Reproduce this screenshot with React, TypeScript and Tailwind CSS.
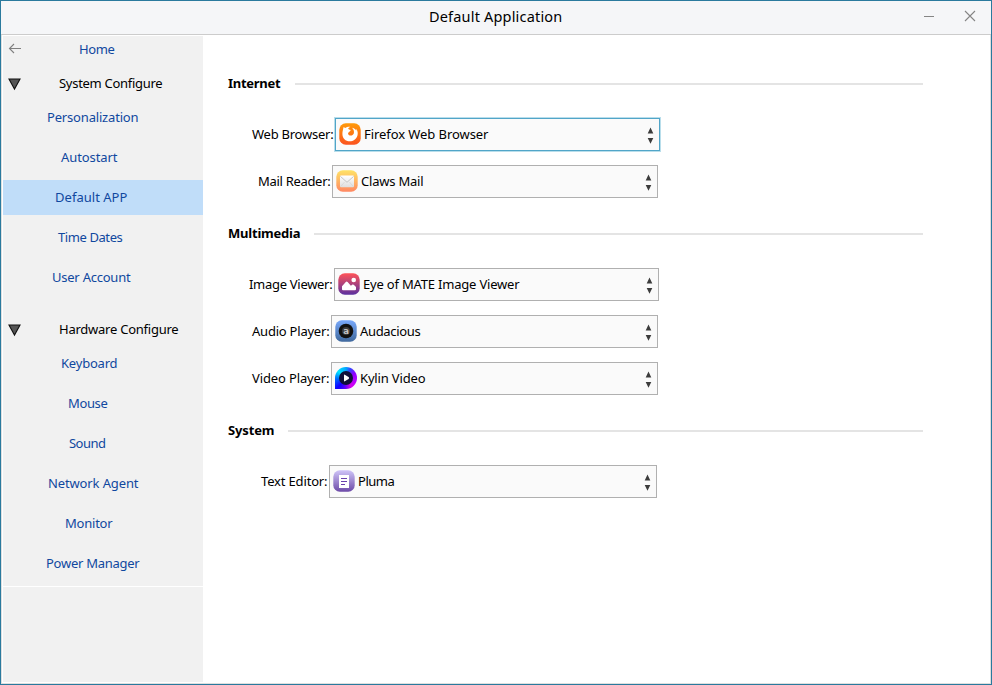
import React, { useLayoutEffect, useRef, useState } from "react";

/* Text label whose tracking adapts so that it fills its given width. */
function Label({ text, width, className = "" }: { text: string; width: number; className?: string }) {
  const ref = useRef<HTMLSpanElement>(null);
  const [spacing, setSpacing] = useState(0);
  useLayoutEffect(() => {
    if (ref.current) setSpacing((width - 0.6 - ref.current.getBoundingClientRect().width) / text.length);
  }, []);
  return (
    <span ref={ref} className={`shrink-0 whitespace-nowrap ${className}`} style={{ letterSpacing: spacing }}>
      {text}
    </span>
  );
}

function FirefoxIcon() {
  return (
    <svg width="22" height="22" viewBox="0 0 22 22">
      <defs>
        <linearGradient id="ff" x1="0" y1="0" x2="0" y2="1">
          <stop offset="0" stopColor="#ff9a08" />
          <stop offset="1" stopColor="#fb5320" />
        </linearGradient>
      </defs>
      <rect x="0.3" y="0.3" width="21.4" height="21.4" rx="6.5" fill="url(#ff)" />
      <path d="M4.6 4 6.2 5.1C7.5 4 9.3 3.5 11.3 3.7L9.2 5.3C9.3 6.6 10.4 6.9 11.9 7.1L10.4 8.8C8.9 9.5 8.6 10.9 9.8 11.9C11.7 13.3 14.1 12.2 14.8 10.4C15.4 8.7 14.7 6.4 13 4.8C15.5 5.2 16.8 6.7 17.2 7.8L17.3 5.8C18.8 8 19.1 10.5 18.4 12.7C17.3 16.2 14.3 18.3 10.8 18.3C6.5 18.3 3.4 15 3.4 10.9C3.4 8.2 4.1 6.6 4.6 4Z" fill="#fff" />
    </svg>
  );
}

function MailIcon() {
  return (
    <svg width="22" height="22" viewBox="0 0 22 22">
      <defs>
        <linearGradient id="ml" x1="0" y1="0" x2="0" y2="1">
          <stop offset="0" stopColor="#ffe266" />
          <stop offset="1" stopColor="#ff8862" />
        </linearGradient>
        <linearGradient id="env" x1="0" y1="0" x2="0" y2="1">
          <stop offset="0" stopColor="#fff" />
          <stop offset="1" stopColor="#dedede" />
        </linearGradient>
      </defs>
      <rect x="0.3" y="0.3" width="21.4" height="21.4" rx="6.5" fill="url(#ml)" />
      <rect x="4" y="5.5" width="14" height="11.8" rx="1" fill="url(#env)" />
      <path d="M4.4 6.4 11 12.3 17.6 6.4" fill="none" stroke="#bdbdbd" strokeWidth="0.9" />
      <path d="M4.6 16.6 8.6 12M17.4 16.6 13.4 12" fill="none" stroke="#d0d0d0" strokeWidth="0.6" />
    </svg>
  );
}

function ImageIcon() {
  return (
    <svg width="22" height="22" viewBox="0 0 22 22">
      <defs>
        <linearGradient id="im" x1="0" y1="0" x2="0" y2="1">
          <stop offset="0" stopColor="#ff5358" />
          <stop offset="1" stopColor="#5b309f" />
        </linearGradient>
      </defs>
      <rect x="0.3" y="0.3" width="21.4" height="21.4" rx="6.5" fill="url(#im)" />
      <path d="M4 16.2V13.2L7.8 8.9Q8.7 8 9.6 8.9L12.9 12.8 14.5 11.6Q15.3 11.1 16 11.9L18 14V16.2Q18 17.2 17 17.2H5Q4 17.2 4 16.2Z" fill="#fff" />
      <circle cx="15.7" cy="7" r="2.3" fill="#fff" />
    </svg>
  );
}

function AudioIcon() {
  return (
    <svg width="22" height="22" viewBox="0 0 22 22">
      <defs>
        <linearGradient id="au" x1="0" y1="0" x2="0" y2="1">
          <stop offset="0" stopColor="#78a8fa" />
          <stop offset="1" stopColor="#40699d" />
        </linearGradient>
      </defs>
      <rect x="0.3" y="0.3" width="21.4" height="21.4" rx="6.5" fill="url(#au)" />
      <circle cx="11" cy="11" r="7.3" fill="#111" />
      <circle cx="11" cy="11" r="4" fill="#3c3c3c" />
      <text x="11.1" y="13.6" textAnchor="middle" fontFamily="DejaVu Sans" fontWeight="700" fontSize="8.5" fill="#c4c4c4">a</text>
    </svg>
  );
}

function VideoIcon() {
  return (
    <svg width="22" height="22" viewBox="0 0 22 22">
      <defs>
        <clipPath id="drop">
          <path d="M0 22V11A11 11 0 1 1 11 22Z" />
        </clipPath>
      </defs>
      <foreignObject width="22" height="22" clipPath="url(#drop)">
        <div className="h-[22px] w-[22px] bg-[conic-gradient(#00a6ff_0deg,#3546ff_25deg,#8900ff_60deg,#b900ff_110deg,#d400ec_150deg,#6000ff_185deg,#1200ff_220deg,#0060ff_260deg,#00e5ff_310deg,#00a6ff_360deg)]" />
      </foreignObject>
      <circle cx="11" cy="11" r="7" fill="#10103a" />
      <path d="M9 8.2Q9 7.4 9.8 7.7L13.6 10.1Q14.6 11 13.6 11.9L9.8 14.3Q9 14.6 9 13.8Z" fill="#fff" />
    </svg>
  );
}

function EditorIcon() {
  return (
    <svg width="22" height="22" viewBox="0 0 22 22">
      <defs>
        <linearGradient id="ed" x1="0" y1="0" x2="0" y2="1">
          <stop offset="0" stopColor="#cfc4f8" />
          <stop offset="1" stopColor="#6d4ba8" />
        </linearGradient>
      </defs>
      <rect x="0.3" y="0.3" width="21.4" height="21.4" rx="6.5" fill="url(#ed)" />
      <path d="M6 5H16V18H6Z" fill="#fff" />
      <path d="M8 8.5H14M8 11.5H14M8 14.5H12" stroke="#6940ad" strokeWidth="1" />
    </svg>
  );
}

type App = {
  label: string; labelPad: string; labelWidth: number; value: string; valueWidth: number;
  box: string; icon: React.ReactNode; focused?: boolean;
};

const internet: App[] = [
  { label: "Web Browser:", labelPad: "w-[107px] pl-6", labelWidth: 82, value: "Firefox Web Browser", valueWidth: 125, box: "w-[325px]", icon: <FirefoxIcon />, focused: true },
  { label: "Mail Reader:", labelPad: "w-[104px] pl-[30px]", labelWidth: 73, value: "Claws Mail", valueWidth: 63, box: "w-[326px]", icon: <MailIcon /> },
];
const multimedia: App[] = [
  { label: "Image Viewer:", labelPad: "w-[106px] pl-[21px]", labelWidth: 84, value: "Eye of MATE Image Viewer", valueWidth: 157, box: "w-[325px]", icon: <ImageIcon /> },
  { label: "Audio Player:", labelPad: "w-[103px] pl-6", labelWidth: 78, value: "Audacious", valueWidth: 61, box: "w-[327px]", icon: <AudioIcon /> },
  { label: "Video Player:", labelPad: "w-[103px] pl-6", labelWidth: 78, value: "Kylin Video", valueWidth: 66, box: "w-[327px]", icon: <VideoIcon /> },
];
const system: App[] = [
  { label: "Text Editor:", labelPad: "w-[101px] pl-[33px]", labelWidth: 67, value: "Pluma", valueWidth: 37, box: "w-[328px]", icon: <EditorIcon /> },
];

function Row({ app }: { app: App }) {
  const frame = app.focused ? "border-[#51a5c8] shadow-[0_0_0_1px_#b9deeb]" : "border-[#b0b0b0]";
  return (
    <div className="flex h-[33px] items-center">
      <div className={`flex shrink-0 pb-px ${app.labelPad}`}>
        <Label text={app.label} width={app.labelWidth} />
      </div>
      <div className={`flex h-[33px] items-center border bg-[#fafafa] pr-[5px] pb-px pl-[3px] ${app.box} ${frame}`}>
        {app.icon}
        <span className="w-[3px]" />
        <Label text={app.value} width={app.valueWidth} />
        <svg className="mt-[3px] ml-auto" width="7" height="17" viewBox="0 0 7 17">
          <path d="M3.5 0.5 6.3 6.5H0.7ZM3.5 16.8 6.3 11H0.7Z" fill="#3c3c3c" />
        </svg>
      </div>
    </div>
  );
}

function Section({ title, width, gap, apps }: { title: string; width: number; gap: string; apps: App[] }) {
  return (
    <section>
      <div className="flex h-5 items-center">
        <div className="flex pb-0.5">
          <Label text={title} width={width} className="font-bold" />
        </div>
        <div className={`${gap} h-0.5 flex-1 bg-[#e4e4e4]`} />
      </div>
      <div className="mt-6 flex flex-col gap-[14px]">
        {apps.map((a) => <Row key={a.label} app={a} />)}
      </div>
    </section>
  );
}

type Item = { text: string; pad: string; width: number };
const systemItems: Item[] = [
  { text: "Personalization", pad: "pl-11", width: 92 },
  { text: "Autostart", pad: "pl-[58px]", width: 57 },
  { text: "Default APP", pad: "pl-[52px]", width: 73 },
  { text: "Time Dates", pad: "pl-[55px]", width: 65 },
  { text: "User Account", pad: "pl-[49px]", width: 79 },
];
const hardwareItems: Item[] = [
  { text: "Keyboard", pad: "pl-[58px]", width: 57 },
  { text: "Mouse", pad: "pl-[65px]", width: 40 },
  { text: "Sound", pad: "pl-[66px]", width: 37 },
  { text: "Network Agent", pad: "pl-[45px]", width: 91 },
  { text: "Monitor", pad: "pl-[62px]", width: 48 },
  { text: "Power Manager", pad: "pl-[43px]", width: 94 },
];

function Group({ title, width, items }: { title: string; width: number; items: Item[] }) {
  return (
    <div>
      <div className="flex h-[34px] items-center pl-[5px]">
        <svg className="mt-[3px]" width="13" height="13" viewBox="0 0 13 13">
          <path d="M1 1H12L6.5 11Z" fill="#555" stroke="#111" strokeWidth="1.1" />
        </svg>
        <span className="w-[38px]" />
        <Label text={title} width={width} />
      </div>
      <div className="flex flex-col gap-[5px] text-[#10489f]">
        {items.map((i) => (
          <div key={i.text} className={`flex h-[35px] items-center pb-px ${i.pad} ${i.text === "Default APP" ? "bg-[#c0ddf9]" : ""}`}>
            <Label text={i.text} width={i.width} />
          </div>
        ))}
      </div>
    </div>
  );
}

export default function App() {
  return (
    <div className="flex h-[685px] w-[992px] flex-col overflow-hidden border border-[#2a7a9e] bg-white font-['Noto_Sans',sans-serif] text-[13px] leading-[18px] text-black">
      <header className="flex h-[34px] shrink-0 items-center border-b border-[#cccccc] bg-[#f5f6f8] pb-[3px] pl-[428px] text-[14.5px]">
        <Label text="Default Application" width={134} />
        <svg className="mr-[11px] ml-auto" width="60" height="20" viewBox="0 0 60 20">
          <path d="M4 10.5H14" stroke="#858585" />
          <path d="M45 5 55 15M55 5 45 15" stroke="#858585" strokeWidth="1.1" />
        </svg>
      </header>
      <div className="flex min-h-0 flex-1 border-x border-b border-[#dedede] pt-px pl-px">
        <aside className="flex w-[200px] flex-col bg-[#f1f1f1]">
          <div className="mb-1 flex h-[26px] items-center pl-[5px]">
            <svg width="14" height="12" viewBox="0 0 14 12">
              <path d="M13 5.5H1.5M6 1 1.5 5.5 6 10" fill="none" stroke="#808080" strokeWidth="1.1" />
            </svg>
            <span className="w-[57px]" />
            <Label text="Home" width={36} className="text-[#10489f]" />
          </div>
          <Group title="System Configure" width={104} items={systemItems} />
          <div className="h-[17px]" />
          <Group title="Hardware Configure" width={120} items={hardwareItems} />
          <div className="mt-[5px] h-px bg-white" />
          <div className="flex-1" />
          <div className="h-px bg-white" />
        </aside>
        <main className="mr-[67px] ml-[25px] flex flex-1 flex-col gap-[26px] pt-[38px]">
          <Section title="Internet" width={53} gap="ml-[15px]" apps={internet} />
          <Section title="Multimedia" width={73} gap="ml-[14px]" apps={multimedia} />
          <Section title="System" width={47} gap="ml-[14px]" apps={system} />
        </main>
      </div>
    </div>
  );
}
